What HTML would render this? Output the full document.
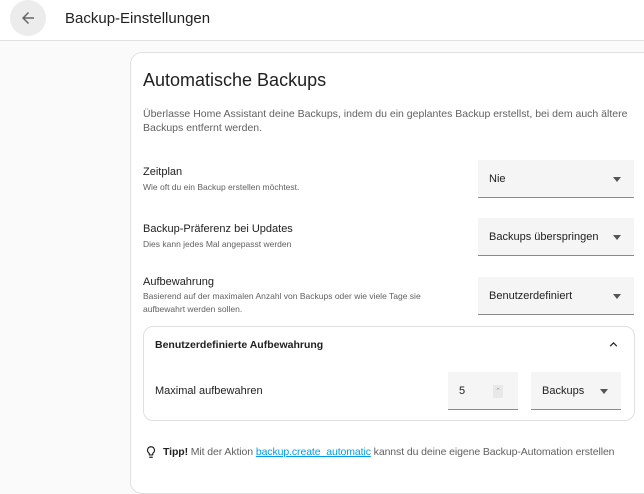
<!DOCTYPE html><html><head><style>
body{margin:0;width:644px;height:473px;overflow:hidden;background:#fafafa;font-family:"Liberation Sans",sans-serif;color:#212121;position:relative}
.a{position:absolute}
.hdr{left:0;top:0;width:644px;height:40px;background:#fff;border-bottom:1px solid #e0e0e0}
.card{left:130px;top:52px;width:530px;height:440px;background:#fff;border:1px solid #e0e0e0;border-radius:12px}
.sel{background:#f5f5f5;border-bottom:1px solid #8a8a8a;font-size:11px;color:#212121;box-sizing:border-box;padding-left:11px;display:flex;align-items:center}
.tri{position:absolute;right:13px;top:50%;margin-top:-2px;border-left:4.5px solid transparent;border-right:4.5px solid transparent;border-top:5px solid #555}
.lab{font-size:11px;color:#212121}
.sub{font-size:8.5px;color:#616161;line-height:13px}
</style></head><body>
<div class="a hdr"></div>
<div class="a" style="left:10px;top:0;width:36px;height:36px;border-radius:50%;background:#ececec"></div>
<svg class="a" style="left:19px;top:9px" width="18" height="18" viewBox="0 0 24 24"><path d="M20 11H7.8l5.6-5.6L12 4l-8 8 8 8 1.4-1.4L7.8 13H20z" fill="#666"/></svg>
<div class="a" style="left:65px;top:10px;font-size:15px">Backup-Einstellungen</div>
<div class="a card"></div>
<div class="a" style="left:143px;top:70px;font-size:18px">Automatische Backups</div>
<div class="a" style="left:143px;top:108px;font-size:10.5px;color:#616161;line-height:13.5px;width:495px">Überlasse Home Assistant deine Backups, indem du ein geplantes Backup erstellst, bei dem auch ältere Backups entfernt werden.</div>
<div class="a lab" style="left:143px;top:166px">Zeitplan</div>
<div class="a sub" style="left:143px;top:181px">Wie oft du ein Backup erstellen möchtest.</div>
<div class="a sel" style="left:478px;top:160px;width:156px;height:38px">Nie<span class="tri"></span></div>
<div class="a lab" style="left:143px;top:223px">Backup-Präferenz bei Updates</div>
<div class="a sub" style="left:143px;top:238px">Dies kann jedes Mal angepasst werden</div>
<div class="a sel" style="left:478px;top:218px;width:156px;height:38px">Backups überspringen<span class="tri"></span></div>
<div class="a lab" style="left:143px;top:276px">Aufbewahrung</div>
<div class="a sub" style="left:143px;top:290px;width:320px">Basierend auf der maximalen Anzahl von Backups oder wie viele Tage sie aufbewahrt werden sollen.</div>
<div class="a sel" style="left:478px;top:277px;width:156px;height:38px">Benutzerdefiniert<span class="tri"></span></div>
<div class="a" style="left:143px;top:326px;width:490px;height:93px;border:1px solid #e0e0e0;border-radius:10px;background:#fff"></div>
<div class="a" style="left:155px;top:339px;font-size:10.5px;font-weight:bold;color:#212121">Benutzerdefinierte Aufbewahrung</div>
<svg class="a" style="left:606px;top:337px" width="15" height="15" viewBox="0 0 24 24"><path d="M7.4 15.4 12 10.8l4.6 4.6L18 14l-6-6-6 6z" fill="#222"/></svg>
<div class="a lab" style="left:155px;top:385px">Maximal aufbewahren</div>
<div class="a sel" style="left:448px;top:372px;width:70px;height:38px">5</div>
<div class="a" style="left:493px;top:385px;width:10px;height:13px;background:#e8e8e8;font-size:7px;color:#999;text-align:center;line-height:13px">⌃</div>
<div class="a sel" style="left:531px;top:372px;width:90px;height:38px">Backups<span class="tri"></span></div>
<svg class="a" style="left:144px;top:444px" width="14" height="16" viewBox="0 0 24 24"><path d="M12 2a7 7 0 0 0-4 12.7V17a1 1 0 0 0 1 1h6a1 1 0 0 0 1-1v-2.3A7 7 0 0 0 12 2zm2.5 11.4-.5.3V16h-4v-2.3l-.5-.3a5 5 0 1 1 5 0zM9 20h6v2H9z" fill="#222"/></svg>
<div class="a" style="left:163px;top:446px;font-size:10.5px;color:#616161;white-space:nowrap;letter-spacing:-0.1px"><b style="color:#212121">Tipp!</b> Mit der Aktion <span style="color:#039be5;text-decoration:underline">backup.create_automatic</span> kannst du deine eigene Backup-Automation erstellen</div>
</body></html>
